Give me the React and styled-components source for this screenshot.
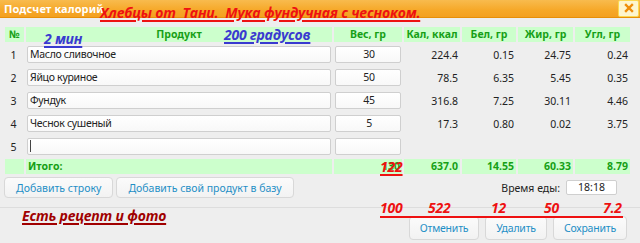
import React from "react";
import styled, { createGlobalStyle } from "styled-components";

const Global = createGlobalStyle`
  html, body { margin: 0; padding: 0; background: #eeeeee; }
  body { font-family: "Noto Sans", "Open Sans", sans-serif; }
  * { box-sizing: border-box; }
`;

const Dialog = styled.div`
  position: relative;
  width: 640px;
  height: 243px;
  background: #eeeeee;
  overflow: hidden;
  display: flex;
  flex-direction: column;
`;

const TitleBar = styled.div`
  height: 18px;
  flex: none;
  display: flex;
  align-items: center;
  justify-content: space-between;
  padding: 0 1px 0 4px;
  background: linear-gradient(#f8bb4e, #f6a828 60%, #f3a020);
  border-bottom: 1px solid #e78f08;
`;

const Title = styled.span`
  color: #ffffff;
  font-weight: bold;
  font-size: 11px;
  letter-spacing: 0.1px;
`;

const CloseBtn = styled.div`
  width: 21px;
  height: 17px;
  margin-top: -1px;
  display: flex;
  align-items: center;
  justify-content: center;
  background: #fdf5ce;
  border: 1px solid #fbd850;
  border-radius: 2px;
`;

const Content = styled.div`
  padding: 9px 10px 0 5px;
  flex: none;
`;

const Table = styled.div`
  display: grid;
  grid-template-columns: 19px 306px 68px 56px 54px 55px 55px;
  column-gap: 2px;
  row-gap: 2px;
`;

const HeadCell = styled.div`
  height: 15px;
  background: #ccffcc;
  color: #16a016;
  font-weight: bold;
  font-size: 10.5px;
  line-height: 15px;
  text-align: center;
  white-space: nowrap;
`;

const NumCell = styled.div`
  height: 21px;
  display: flex;
  align-items: center;
  justify-content: ${(p) => (p.$center ? "center" : "flex-end")};
  padding-right: 2px;
  font-size: 10.5px;
  color: #222;
`;

const InputCell = styled.div`
  height: 21px;
  display: flex;
  align-items: center;
  padding: 0 1px 0 1px;
`;

const Field = styled.div`
  width: 100%;
  height: 17px;
  background: linear-gradient(#ffffff, #f8f8f8);
  border: 1px solid #cfcfcf;
  border-radius: 2px;
  font-size: 10.5px;
  letter-spacing: -0.3px;
  color: #222;
  line-height: 15px;
  padding-left: 2px;
  text-align: ${(p) => (p.$center ? "center" : "left")};
  white-space: nowrap;
`;

const Caret = styled.span`
  display: inline-block;
  width: 1px;
  height: 12px;
  margin-top: 1px;
  vertical-align: top;
  background: #444;
`;

const TotalCell = styled.div`
  height: 15px;
  background: #ccffcc;
  color: #16a016;
  font-weight: bold;
  font-size: 10.5px;
  line-height: 15px;
  text-align: ${(p) => (p.$left ? "left" : "right")};
  padding: 0 2px;
`;

const ActionsRow = styled.div`
  display: flex;
  align-items: center;
  justify-content: space-between;
  padding: 3px 0 0 0;
  margin-left: -1px;
`;

const Group = styled.div`
  display: flex;
  align-items: center;
  gap: ${(p) => p.$gap || 3}px;
`;

const Button = styled.div`
  height: ${(p) => p.$h || 21}px;
  padding: 0 ${(p) => p.$px || 10}px;
  display: flex;
  align-items: center;
  background: linear-gradient(#fbfbfb, #f2f2f2);
  border: 1px solid #d8d8d8;
  border-radius: 4px;
  color: #1f8fc6;
  font-size: 10.5px;
  letter-spacing: ${(p) => p.$ls || 0}px;
  white-space: nowrap;
`;

const TimeLabel = styled.span`
  font-size: 10.5px;
  color: #222;
  margin-right: 3px;
`;

const TimeInput = styled.div`
  width: 51px;
  height: 15px;
  background: #fff;
  border: 1px solid #cfcfcf;
  border-radius: 2px;
  font-size: 10.5px;
  line-height: 13px;
  text-align: center;
  color: #222;
  margin-right: 13px;
`;

const ButtonPane = styled.div`
  margin-top: 9px;
  border-top: 1px solid #dddddd;
  padding: 8px 13px 0 0;
  display: flex;
  justify-content: flex-end;
`;

const Note = styled.div`
  position: absolute;
  left: ${(p) => p.$x}px;
  top: ${(p) => p.$y}px;
  color: ${(p) => p.$color};
  font-family: "Open Sans", "Noto Sans", sans-serif;
  font-style: italic;
  font-weight: bold;
  font-size: ${(p) => p.$size || 14}px;
  letter-spacing: -0.2px;
  line-height: 1;
  white-space: pre;
  text-decoration: underline;
  text-decoration-thickness: 1.5px;
  text-underline-offset: 2px;
`;

const NoteLine = styled.div`
  position: absolute;
  left: ${(p) => p.$x}px;
  top: ${(p) => p.$y}px;
  width: ${(p) => p.$w}px;
  display: grid;
  grid-template-columns: 48px 63px 53px 59px 1fr;
  padding-bottom: 1px;
  border-bottom: 2px solid #ee1111;
  color: #ee1111;
  font-family: "Open Sans", "Noto Sans", sans-serif;
  font-style: italic;
  font-weight: bold;
  font-size: 14px;
  letter-spacing: -0.2px;
  line-height: 1;
`;

const rows = [
  { n: 1, name: "Масло сливочное", w: "30", v: ["224.4", "0.15", "24.75", "0.24"] },
  { n: 2, name: "Яйцо куриное", w: "50", v: ["78.5", "6.35", "5.45", "0.35"] },
  { n: 3, name: "Фундук", w: "45", v: ["316.8", "7.25", "30.11", "4.46"] },
  { n: 4, name: "Чеснок сушеный", w: "5", v: ["17.3", "0.80", "0.02", "3.75"] },
  { n: 5, name: "", w: "", v: ["", "", "", ""] },
];

const heads = ["№", "Продукт", "Вес, гр", "Кал, ккал", "Бел, гр", "Жир, гр", "Угл, гр"];
const totals = ["130", "637.0", "14.55", "60.33", "8.79"];
const recipe = ["100", "522", "12", "50", "7.2"];

export default function App() {
  return (
    <Dialog>
      <Global />
      <TitleBar>
        <Title>Подсчет калорий</Title>
        <CloseBtn>
          <svg width="10" height="10" viewBox="0 0 10 10">
            <path d="M2 2 L8 8 M8 2 L2 8" stroke="#ef8c08" strokeWidth="2.4" strokeLinecap="square" />
          </svg>
        </CloseBtn>
      </TitleBar>
      <Content>
        <Table>
          {heads.map((h) => (
            <HeadCell key={h}>{h}</HeadCell>
          ))}
          {rows.map((r) => (
            <React.Fragment key={r.n}>
              <NumCell $center>{r.n}</NumCell>
              <InputCell>
                <Field>{r.n === 5 ? <Caret /> : r.name}</Field>
              </InputCell>
              <InputCell>
                <Field $center>{r.w}</Field>
              </InputCell>
              {r.v.map((x, i) => (
                <NumCell key={i}>{x}</NumCell>
              ))}
            </React.Fragment>
          ))}
          <TotalCell />
          <TotalCell $left>Итого:</TotalCell>
          {totals.map((t, i) => (
            <TotalCell key={i}>{t}</TotalCell>
          ))}
        </Table>
        <ActionsRow>
          <Group>
            <Button $px={11}>Добавить строку</Button>
            <Button $px={11}>Добавить свой продукт в базу</Button>
          </Group>
          <Group $gap={0}>
            <TimeLabel>Время еды:</TimeLabel>
            <TimeInput>18:18</TimeInput>
          </Group>
        </ActionsRow>
      </Content>
      <ButtonPane>
        <Group $gap={6}>
          <Button $h={24} $px={10} $ls={-0.2}>Отменить</Button>
          <Button $h={24} $px={10} $ls={-0.2}>Удалить</Button>
          <Button $h={24} $px={10} $ls={-0.2}>Сохранить</Button>
        </Group>
      </ButtonPane>

      <Note $x={100} $y={6} $color="#ee1111">{"Хлебцы от  Тани.  Мука фундучная с чесноком."}</Note>
      <Note $x={44} $y={32} $color="#3a3ad0">2 мин</Note>
      <Note $x={224} $y={28} $color="#3a3ad0">200 градусов</Note>
      <Note $x={380} $y={160} $color="#ee1111">122</Note>
      <Note $x={22} $y={209} $color="#a00000">Есть рецепт и фото</Note>
      <NoteLine $x={380} $y={201} $w={243}>
        {recipe.map((t) => (
          <span key={t}>{t}</span>
        ))}
      </NoteLine>
    </Dialog>
  );
}
